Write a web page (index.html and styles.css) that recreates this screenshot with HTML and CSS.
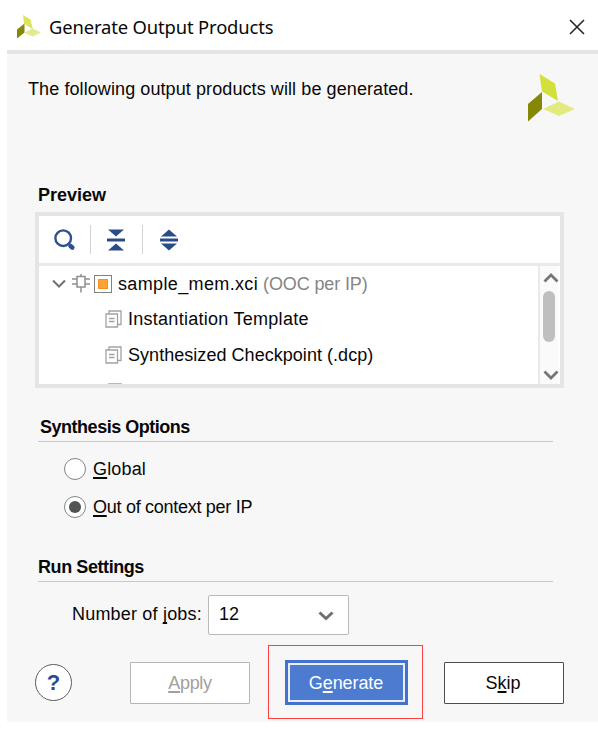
FILE: index.html
```html
<!DOCTYPE html>
<html lang="en">
<head>
<meta charset="utf-8">
<title>Generate Output Products</title>
<link rel="stylesheet" href="styles.css">
</head>
<body>
<div class="dialog">
  <header class="titlebar">
    <svg class="logo-small" viewBox="0 0 48 48"><path fill="#dbe45c" d="M12 0 27 9 32 29 14 17z"/><path fill="#858705" d="M0 29 15 17V35L0 47z"/><path fill="#e3ea90" d="M15 35 31 27 48 35 31 43z"/></svg>
    <h1>Generate Output Products</h1>
    <svg class="close" viewBox="0 0 16 16"><path d="M1 1 15 15M15 1 1 15" fill="none" stroke="#222" stroke-width="1.5"/></svg>
  </header>
  <main>
    <div class="intro">
      <p><span class="t-intro">The following output products will be generated.</span></p>
      <svg class="logo" viewBox="0 0 48 48"><path fill="#d3df3b" d="M11.500 0 27 9.500 30 27 14 17.500z"/><path fill="#858705" d="M0 30 14 18V35L0 47.500z"/><path fill="#e3ea80" d="M15 35 31 27.500 47 35 31 42z"/></svg>
    </div>
    <h2 class="t-preview">Preview</h2>
    <section class="panel">
      <div class="toolbar">
        <svg class="tool" width="22" height="22" viewBox="0 0 22 22"><circle cx="9.200" cy="9.200" r="7.800" fill="none" stroke="#2f508c" stroke-width="2.400"/><path d="M16.500 17 18.300 18.500" stroke="#2f508c" stroke-width="4.600" stroke-linecap="round"/></svg>
        <i></i>
        <svg class="tool" width="18" height="22" viewBox="0 0 18 22"><path fill="#2b4c8a" d="M1 .5H17L9 7.500zM0 9.500H18V12.500H0zM1 21.500H17L9 14.500z"/></svg>
        <i></i>
        <svg class="tool" width="18" height="22" viewBox="0 0 18 22"><path fill="#2b4c8a" d="M1 7.500H17L9 .5zM0 9.500H18V12.500H0zM1 14.500H17L9 21.500z"/></svg>
      </div>
      <div class="content">
        <div class="tree">
          <div class="row root">
            <svg width="14" height="9" viewBox="0 0 14 9"><path d="M1 1.500 7 7.500 13 1.500" fill="none" stroke="#707070" stroke-width="2"/></svg>
            <svg class="chip" width="18" height="19" viewBox="0 0 18 19"><path d="M5 2.500H13V13H5zM0 5H5M0 10H5M13 5H18M13 10H18M9 0V2.500M9 13V18.500" fill="none" stroke="#8d8f90" stroke-width="1.500"/></svg>
            <span class="ip"><b></b></span>
            <span class="label"><span class="t-root">sample_mem.xci</span> <em>(OOC per IP)</em></span>
          </div>
          <div class="row child">
            <svg width="17" height="18" viewBox="0 0 17 18"><path d="M4 3.500V1H16V14.500H13M1 4H12.500V17H1zM4 8.500H9.500M4 11.500H9.500" fill="none" stroke="#a2a2a2" stroke-width="1.300"/></svg>
            <span class="label t-inst">Instantiation Template</span>
          </div>
          <div class="row child">
            <svg width="17" height="18" viewBox="0 0 17 18"><path d="M4 3.500V1H16V14.500H13M1 4H12.500V17H1zM4 8.500H9.500M4 11.500H9.500" fill="none" stroke="#a2a2a2" stroke-width="1.300"/></svg>
            <span class="label t-synth">Synthesized Checkpoint (.dcp)</span>
          </div>
          <div class="row child last">
            <svg width="17" height="18" viewBox="0 0 17 18"><path d="M4 3.500V1H16V14.500H13M1 4H12.500V17H1z" fill="none" stroke="#a2a2a2" stroke-width="1.600"/></svg>
          </div>
        </div>
        <div class="scroll">
          <svg width="16" height="10" viewBox="0 0 16 10"><path d="M1.500 8.500 8 2 14.500 8.500" fill="none" stroke="#757575" stroke-width="2.800"/></svg>
          <div class="thumb"></div>
          <svg class="down" width="16" height="10" viewBox="0 0 16 10"><path d="M1.500 1.500 8 8 14.500 1.500" fill="none" stroke="#757575" stroke-width="2.800"/></svg>
        </div>
      </div>
    </section>
    <section class="options">
      <h2 class="t-options">Synthesis Options</h2>
      <div class="radio"><span class="dot"></span><span class="t-global"><u>G</u>lobal</span></div>
      <div class="radio"><span class="dot on"></span><span class="t-ooc"><u>O</u>ut of context per IP</span></div>
    </section>
    <section class="settings">
      <h2 class="t-run">Run Settings</h2>
      <div class="jobs">
        <span class="t-jobs">Number of <u>j</u>obs:</span>
        <div class="select"><span>12</span><svg width="16" height="10" viewBox="0 0 16 10"><path d="M1.500 1.500 8 7.500 14.500 1.500" fill="none" stroke="#707070" stroke-width="3"/></svg></div>
      </div>
    </section>
    <footer>
      <div class="help">?</div>
      <div class="btn apply"><span class="t-apply"><u>A</u>pply</span></div>
      <div class="mark"><div class="btn generate"><span class="t-gen">G<u>e</u>nerate</span></div></div>
      <div class="btn skip"><span class="t-skip">S<u>k</u>ip</span></div>
    </footer>
  </main>
</div>
</body>
</html>
```
FILE: styles.css
```css
* { box-sizing: border-box; }
body { margin: 0; background: #fff; color: #080808; font: 18px/24px "Liberation Sans", Arial, sans-serif; overflow: hidden; }
svg { display: block; flex: none; }
h1, h2, p { margin: 0; }
u { text-decoration: underline; text-decoration-thickness: 1.5px; text-underline-offset: 2px; text-decoration-skip-ink: none; }
span { white-space: nowrap; }
.dialog { width: 591px; margin-left: 7px; }
.titlebar { display: flex; align-items: center; height: 50px; padding: 4px 13px 0 10px; }
.logo-small { width: 24px; height: 24px; margin-top: -1px; }
.titlebar h1 { margin-left: 8px; font: 400 18.4px/26px "Noto Sans", "Open Sans", sans-serif; letter-spacing: -.14px; }
.close { width: 16px; height: 16px; margin-left: auto; }
main { height: 672px; background: #f7f7f7; border-top: 4px solid #e5e5e5; }
.intro { display: flex; justify-content: space-between; height: 129px; padding: 20px 22px 0 21px; }
.intro p { padding-top: 3px; }
.logo { width: 48px; height: 48px; }
h2 { height: 24px; font-size: 18px; line-height: 24px; }

/* tracking per label */
.t-intro { letter-spacing: .09px; }
.t-root { letter-spacing: .36px; }
.t-inst { letter-spacing: .27px; }
.t-synth { letter-spacing: .04px; }
.t-options { letter-spacing: -.48px; padding-left: 2px; }
.t-global { letter-spacing: .15px; }
.t-ooc { letter-spacing: -.28px; }
.t-run { letter-spacing: -.42px; }
.t-jobs { letter-spacing: .19px; }
.t-apply { letter-spacing: -.3px; }
.t-gen { letter-spacing: -.1px; }

.t-preview { margin-left: 31px; }
.panel { width: 529px; height: 176px; margin: 5px 0 0 28px; border: 4px solid #e5e5e5; background: #fff; }
.toolbar { display: flex; align-items: center; height: 50px; padding-left: 15px; border-bottom: 3px solid #e9e9e9; }
.toolbar i { width: 1px; height: 29px; margin: 0 16px 0 14px; background: #d3d3d3; }
.toolbar .tool + i ~ .tool + i { margin: 0 17px; }
.content { display: flex; height: 118px; overflow: hidden; }
.tree { flex: 1; }
.row { display: flex; align-items: center; height: 35.5px; }
.root { padding-left: 13px; }
.chip { margin-left: 6px; }
.ip { display: grid; place-items: center; width: 18px; height: 18px; margin: 0 6px 0 4px; border: 1px solid #7f8183; background: #fff; }
.ip b { width: 10px; height: 10px; background: #ffa333; border: 1px solid #f88e24; }
.label em { font-style: normal; color: #858585; letter-spacing: -.13px; }
.child { padding-left: 66px; }
.child .label { margin-left: 6px; }
.last { padding-top: 3px; }
.scroll { display: flex; flex-direction: column; align-items: center; width: 20px; padding: 7px 0 4px 2px; margin-right: 2px; border-left: 2px solid #e9e9e9; background: #fafafa; }
.thumb { width: 12px; height: 51px; margin: 8px 3px 0 0; border-radius: 6px; background: #bfbfbf; }
.scroll svg { margin-right: -1px; }
.scroll .down { margin-top: auto; }
.options { height: 140px; margin: 27px 0 0 31px; }
.options h2, .settings h2 { width: 515px; height: 27px; border-bottom: 1px solid #c8c8c8; }
.radio { display: flex; align-items: center; height: 38px; padding-left: 26px; }
.options h2 + .radio { margin-top: 8px; }
.radio .dot { display: grid; place-items: center; width: 22px; height: 22px; margin-right: 7px; border: 1px solid #858585; border-radius: 50%; background: #fff; }
.dot.on::after { content: ""; width: 12px; height: 12px; border-radius: 50%; background: #505452; }
.settings { height: 90px; margin-left: 31px; }
.jobs { display: flex; align-items: center; margin: 13px 0 0 34px; }
.jobs > span { width: 136px; margin-top: -2px; }
.select { display: flex; align-items: center; justify-content: space-between; width: 141px; height: 40px; padding: 0 14px 2px 10px; border: 1px solid #b9b9b9; border-radius: 2px; background: #fff; }
.select svg { margin-top: 3px; }
footer { display: flex; align-items: center; height: 74px; padding-left: 28px; }
.help { width: 37px; height: 37px; border: 1px solid #5d5d5d; border-radius: 50%; background: #fff; color: #2b4c8a; text-align: center; font: 700 22px/35px "Liberation Sans", Arial, sans-serif; }
.btn { display: flex; align-items: center; justify-content: center; width: 120px; height: 42px; margin-top: 1px; border: 1px solid #b5b5b5; border-radius: 1px; background: #fff; }
.apply { margin-left: 58px; color: #a0a0a0; }
.mark { display: grid; place-items: center; width: 155px; height: 74px; margin-left: 18px; border: 1px solid #ff4040; }
.generate { width: 123px; height: 45px; margin-left: 1px; border: 3px solid #4272cd; border-radius: 0; background: #4d7bd0; box-shadow: inset 0 0 0 2px #e8effb; color: #fff; }
.skip { margin-left: 21px; padding-right: 2px; border-color: #4c4c4c; }
```
